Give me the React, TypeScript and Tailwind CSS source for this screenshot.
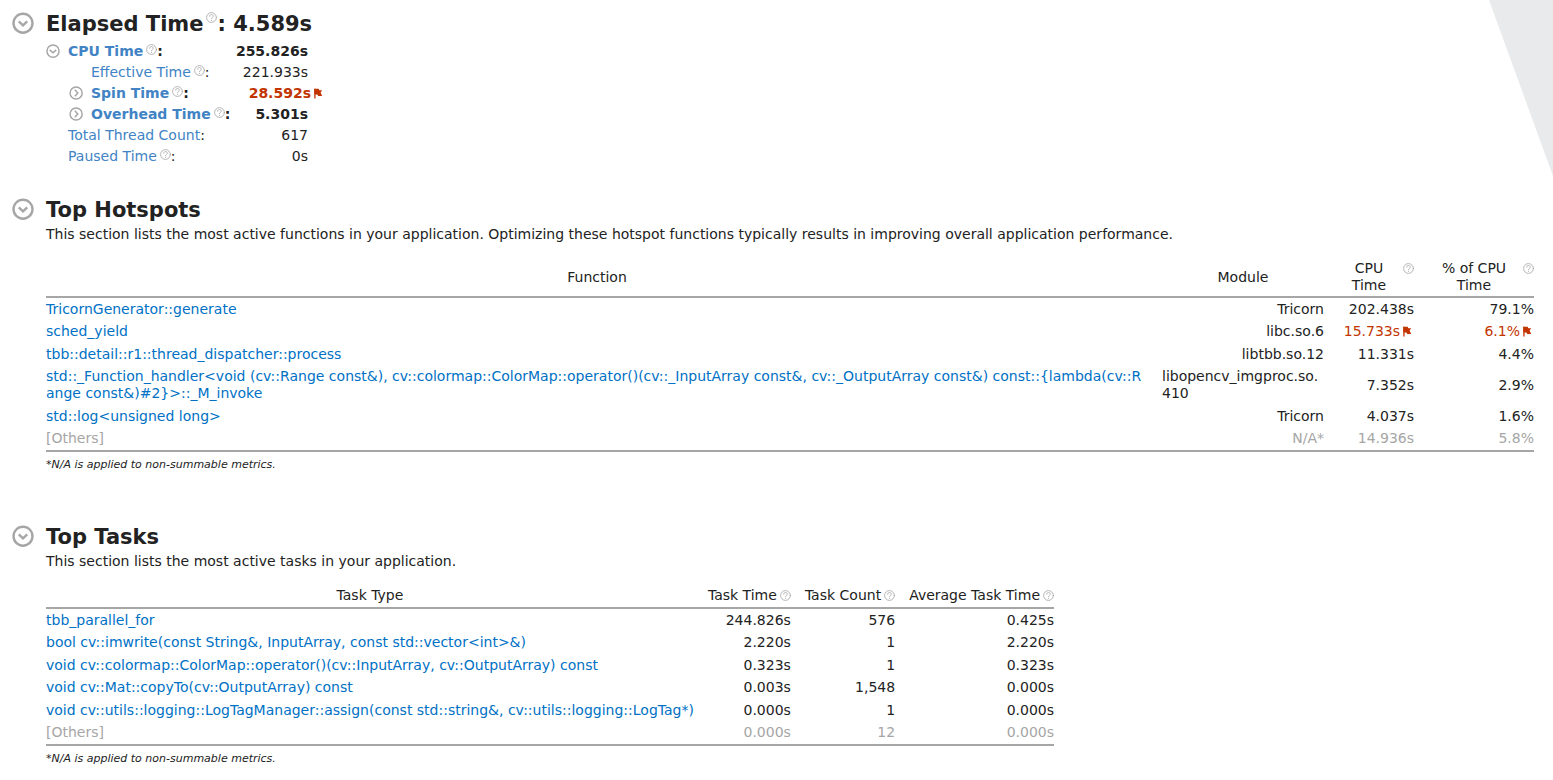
import React from "react";

type Flagged = { text: string; flag?: boolean };

function Help() {
  return (
    <button type="button" aria-label="Help" className="block h-[11px] w-[11px] shrink-0">
      <svg viewBox="0 0 11 11" className="h-full w-full" fill="none" stroke="#adadad" strokeWidth="0.9" strokeLinecap="round">
        <circle cx="5.5" cy="5.5" r="4.9" />
        <path d="M3.7 4.3C3.7 3.1 4.5 2.5 5.5 2.5S7.3 3.1 7.3 4.2C7.3 5.4 5.5 5.3 5.5 6.6" />
        <path d="M5.5 8.2V8.5" />
      </svg>
    </button>
  );
}

function Flag() {
  return (
    <svg viewBox="0 0 14 12" className="h-3 w-[14px] shrink-0" fill="#c23400" aria-hidden="true">
      <path d="M3.3 .8H4.6V10.6H3.3Z" />
      <path d="M3.3 .8H7.6L8.4 2.2H11.2L9.6 4.6L11.2 7.9H7.2L6.4 6.4H3.3Z" />
    </svg>
  );
}

function Toggle({ open, size, label }: { open: boolean; size: "lg" | "sm"; label: string }) {
  const large = size === "lg";
  return (
    <button type="button" aria-expanded={open} aria-label={label} className={large ? "block h-[22px] w-[22px] shrink-0" : "block h-[14px] w-[14px] shrink-0"}>
      <svg viewBox="0 0 22 22" className={open ? "h-full w-full" : "h-full w-full -rotate-90"} fill="none" stroke="#a6a6a6" strokeWidth={large ? 2.4 : 2.3}>
        <circle cx="11" cy="11.2" r="9.5" />
        <path d={large ? "M6.8 9.4L11 13.3L15.2 9.4" : "M5.9 9.2L11 13.8L16.1 9.2"} />
      </svg>
    </button>
  );
}

function Heading({ title, children }: { title: string; children?: React.ReactNode }) {
  return (
    <div className="flex gap-3">
      <div className="pt-[2px]">
        <Toggle open size="lg" label={`Toggle ${title}`} />
      </div>
      <h2 className="flex items-center text-[21px] font-bold leading-7">
        {title}
        {children}
      </h2>
    </div>
  );
}

type Metric = { name: string; value: string; indent: string; bold?: boolean; help?: boolean; open?: boolean; flag?: boolean };

const metrics: Metric[] = [
  { name: "CPU Time", value: "255.826s", indent: "pl-[46px]", bold: true, help: true, open: true },
  { name: "Effective Time", value: "221.933s", indent: "pl-[69px]", help: true },
  { name: "Spin Time", value: "28.592s", indent: "pl-[69px]", bold: true, help: true, open: false, flag: true },
  { name: "Overhead Time", value: "5.301s", indent: "pl-[69px]", bold: true, help: true, open: false },
  { name: "Total Thread Count", value: "617", indent: "pl-[46px]" },
  { name: "Paused Time", value: "0s", indent: "pl-[46px]", help: true },
];

function MetricRow({ m }: { m: Metric }) {
  return (
    <li className={`flex h-[21px] w-[308px] items-center justify-between whitespace-nowrap ${m.indent} ${m.bold ? "font-bold" : ""}`}>
      <div className="flex items-center">
        <span className="flex w-[22px] shrink-0 pb-[2px]">
          {m.open !== undefined && <Toggle open={m.open} size="sm" label={`Toggle ${m.name}`} />}
        </span>
        <a href="#" className="text-[#4183c4]">{m.name}</a>
        {m.help && <span className="ml-[3px] pb-[5px]"><Help /></span>}
        <span>:</span>
      </div>
      {m.flag ? (
        <span className="-mr-[17px] flex items-center text-[#c23400]">{m.value}<Flag /></span>
      ) : (
        <span>{m.value}</span>
      )}
    </li>
  );
}

function Value({ text, flag }: Flagged) {
  if (!flag) return <>{text}</>;
  return <span className="flex items-center justify-end text-[#c23400]">{text}<Flag /></span>;
}

const hotspots: { fn: string; module: string; time: Flagged; share: Flagged }[] = [
  { fn: "TricornGenerator::generate", module: "Tricorn", time: { text: "202.438s" }, share: { text: "79.1%" } },
  { fn: "sched_yield", module: "libc.so.6", time: { text: "15.733s", flag: true }, share: { text: "6.1%", flag: true } },
  { fn: "tbb::detail::r1::thread_dispatcher::process", module: "libtbb.so.12", time: { text: "11.331s" }, share: { text: "4.4%" } },
  { fn: "std::_Function_handler<void (cv::Range const&), cv::colormap::ColorMap::operator()(cv::_InputArray const&, cv::_OutputArray const&) const::{lambda(cv::Range const&)#2}>::_M_invoke", module: "libopencv_imgproc.so.410", time: { text: "7.352s" }, share: { text: "2.9%" } },
  { fn: "std::log<unsigned long>", module: "Tricorn", time: { text: "4.037s" }, share: { text: "1.6%" } },
  { fn: "[Others]", module: "N/A*", time: { text: "14.936s" }, share: { text: "5.8%" } },
];

const tasks = [
  ["tbb_parallel_for", "244.826s", "576", "0.425s"],
  ["bool cv::imwrite(const String&, InputArray, const std::vector<int>&)", "2.220s", "1", "2.220s"],
  ["void cv::colormap::ColorMap::operator()(cv::InputArray, cv::OutputArray) const", "0.323s", "1", "0.323s"],
  ["void cv::Mat::copyTo(cv::OutputArray) const", "0.003s", "1,548", "0.000s"],
  ["void cv::utils::logging::LogTagManager::assign(const std::string&, cv::utils::logging::LogTag*)", "0.000s", "1", "0.000s"],
  ["[Others]", "0.000s", "12", "0.000s"],
];

const tableClass =
  "mt-[17px] border-separate border-spacing-0 [&_th]:border-b-2 [&_th]:border-[#a6a6a6] [&_th]:font-normal [&_td]:pt-[2px] [&_td]:pb-[3px] [&_tr:last-child>td]:border-b-2 [&_td]:border-[#a6a6a6]";
const rowClass = "odd:h-[23px] last:text-[#a6a6a6]";

function NameCell({ name }: { name: string }) {
  return name === "[Others]" ? <>{name}</> : <a href="#" className="text-[#0071c5]">{name}</a>;
}

function Note() {
  return <p className="mt-1 text-[11px] italic leading-[17px]">*N/A is applied to non-summable metrics.</p>;
}

export default function App() {
  return (
    <main className="relative min-h-screen overflow-hidden bg-white pb-3 pl-3 pr-[19px] pt-[10px] font-['DejaVu_Sans',sans-serif] text-[14px] leading-[17px] text-[#222222]">
      <svg viewBox="0 0 64 176" className="absolute right-0 top-0 h-[176px] w-16" aria-hidden="true">
        <path d="M0 0H64V176Z" fill="#e9eaec" />
      </svg>

      <section>
        <Heading title="Elapsed Time">
          <span className="ml-[3px] pb-[13px]"><Help /></span>
          <span>: 4.589s</span>
        </Heading>
        <ul className="-ml-3 mt-[3px]">
          {metrics.map((m) => <MetricRow key={m.name} m={m} />)}
        </ul>
      </section>

      <section className="mt-[29px]">
        <Heading title="Top Hotspots" />
        <div className="pl-[34px]">
          <p className="mt-[2px]">This section lists the most active functions in your application. Optimizing these hotspot functions typically results in improving overall application performance.</p>
          <table className={`w-full table-fixed ${tableClass}`}>
            <colgroup>
              <col />
              <col className="w-[176px]" />
              <col className="w-[90px]" />
              <col className="w-[120px]" />
            </colgroup>
            <thead>
              <tr>
                <th className="pb-[2px]">Function</th>
                <th className="pb-[2px] pl-[14px]">Module</th>
                <th className="pb-[2px] pl-[14px]">
                  <div className="flex"><span className="flex-1">CPU Time</span><span className="pl-[3px] pt-[3px]"><Help /></span></div>
                </th>
                <th className="pb-[2px] pl-[14px]">
                  <div className="flex"><span className="flex-1">% of CPU Time</span><span className="pl-[3px] pt-[3px]"><Help /></span></div>
                </th>
              </tr>
            </thead>
            <tbody>
              {hotspots.map((h) => (
                <tr key={h.fn} className={rowClass}>
                  <td className="break-all"><NameCell name={h.fn} /></td>
                  <td className="break-all pl-[14px] text-right"><span className="inline-block text-left align-top">{h.module}</span></td>
                  <td className="pl-[14px] text-right"><Value {...h.time} /></td>
                  <td className="pl-[14px] text-right"><Value {...h.share} /></td>
                </tr>
              ))}
            </tbody>
          </table>
          <Note />
        </div>
      </section>

      <section className="mt-[50px]">
        <Heading title="Top Tasks" />
        <div className="pl-[34px]">
          <p className="mt-[2px]">This section lists the most active tasks in your application.</p>
          <table className={`whitespace-nowrap ${tableClass}`}>
            <thead>
              <tr>
                <th className="pb-[3px]">Task Type</th>
                {["Task Time", "Task Count", "Average Task Time"].map((t) => (
                  <th key={t} className="pb-[3px] pl-[14px]">
                    <div className="flex items-center gap-[3px]">{t}<Help /></div>
                  </th>
                ))}
              </tr>
            </thead>
            <tbody>
              {tasks.map(([name, ...values]) => (
                <tr key={name} className={rowClass}>
                  <td><NameCell name={name} /></td>
                  {values.map((v, i) => <td key={i} className="pl-[14px] text-right">{v}</td>)}
                </tr>
              ))}
            </tbody>
          </table>
          <Note />
        </div>
      </section>
    </main>
  );
}
